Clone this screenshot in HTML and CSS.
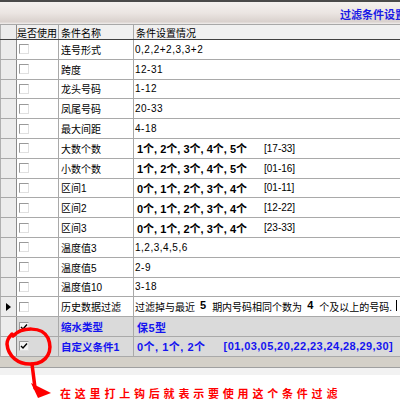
FILE: index.html
```html
<!DOCTYPE html>
<html>
<head>
<meta charset="utf-8">
<link rel="stylesheet" href="styles.css">
</head>
<body>
<div class="win">
  <div class="titlebar"><span class="title">过滤条件设置</span></div>
  <div class="grid">
    <div class="row head">
      <div class="rh"></div>
      <div class="c1">是否使用</div>
      <div class="c2">条件名称</div>
      <div class="c3">条件设置情况</div>
    </div>
    <div class="row"><div class="rh"></div><div class="c1"><span class="cb"></span></div><div class="c2">连号形式</div><div class="c3 plain">0,2,2+2,3,3+2</div></div>
    <div class="row"><div class="rh"></div><div class="c1"><span class="cb"></span></div><div class="c2">跨度</div><div class="c3 plain">12-31</div></div>
    <div class="row"><div class="rh"></div><div class="c1"><span class="cb"></span></div><div class="c2">龙头号码</div><div class="c3 plain">1-12</div></div>
    <div class="row"><div class="rh"></div><div class="c1"><span class="cb"></span></div><div class="c2">凤尾号码</div><div class="c3 plain">20-33</div></div>
    <div class="row"><div class="rh"></div><div class="c1"><span class="cb"></span></div><div class="c2">最大间距</div><div class="c3 plain">4-18</div></div>
    <div class="row"><div class="rh"></div><div class="c1"><span class="cb"></span></div><div class="c2">大数个数</div><div class="c3"><b class="cnt">1个, 2个, 3个, 4个, 5个</b><span class="rng">[17-33]</span></div></div>
    <div class="row"><div class="rh"></div><div class="c1"><span class="cb"></span></div><div class="c2">小数个数</div><div class="c3"><b class="cnt">1个, 2个, 3个, 4个, 5个</b><span class="rng">[01-16]</span></div></div>
    <div class="row"><div class="rh"></div><div class="c1"><span class="cb"></span></div><div class="c2">区间1</div><div class="c3"><b class="cnt">0个, 1个, 2个, 3个, 4个</b><span class="rng">[01-11]</span></div></div>
    <div class="row"><div class="rh"></div><div class="c1"><span class="cb"></span></div><div class="c2">区间2</div><div class="c3"><b class="cnt">0个, 1个, 2个, 3个, 4个</b><span class="rng">[12-22]</span></div></div>
    <div class="row"><div class="rh"></div><div class="c1"><span class="cb"></span></div><div class="c2">区间3</div><div class="c3"><b class="cnt">0个, 1个, 2个, 3个, 4个</b><span class="rng">[23-33]</span></div></div>
    <div class="row"><div class="rh"></div><div class="c1"><span class="cb"></span></div><div class="c2">温度值3</div><div class="c3 plain">1,2,3,4,5,6</div></div>
    <div class="row"><div class="rh"></div><div class="c1"><span class="cb"></span></div><div class="c2">温度值5</div><div class="c3 plain">2-9</div></div>
    <div class="row"><div class="rh"></div><div class="c1"><span class="cb"></span></div><div class="c2">温度值10</div><div class="c3 plain">3-18</div></div>
    <div class="row"><div class="rh"><span class="arrow"></span></div><div class="c1"><span class="cb"></span></div><div class="c2">历史数据过滤</div><div class="c3 edit">过滤掉与最近<b class="num">5</b>期内号码相同个数为<b class="num">4</b>个及以上的号码.<span class="caret"></span></div></div>
    <div class="row sel"><div class="rh"></div><div class="c1"><span class="cb on"><svg viewBox="0 0 8 8" width="8" height="8"><polyline points="1,4 3,6 7,1.5" fill="none" stroke="#000" stroke-width="1.4"/></svg></span></div><div class="c2">缩水类型</div><div class="c3"><b class="val">保5型</b></div></div>
    <div class="row sel"><div class="rh"></div><div class="c1"><span class="cb on"><svg viewBox="0 0 8 8" width="8" height="8"><polyline points="1,4 3,6 7,1.5" fill="none" stroke="#000" stroke-width="1.4"/></svg></span></div><div class="c2">自定义条件1</div><div class="c3"><b class="val">0个, 1个, 2个</b><b class="val list">[01,03,05,20,22,23,24,28,29,30]</b></div></div>
  </div>
  <div class="filler"></div>
  <div class="band"></div>
  <p class="note">在这里打上钩后就表示要使用这个条件过滤</p>
  <svg class="annot" width="400" height="420" viewBox="0 0 400 420">
    <path d="M13 336 C 22 327, 42 326, 48 338 C 53 350, 48 363, 32 364 C 18 365, 8 356, 7 344 C 7 340, 9 337, 12 334" fill="none" stroke="#ff0000" stroke-width="3.5" stroke-linecap="round"/>
    <path d="M32 364 C 33 372, 34 380, 35 388" fill="none" stroke="#ff0000" stroke-width="3.5" stroke-linecap="round"/>
    <polygon points="31,383 51,393 38,398" fill="#ff0000"/>
  </svg>
</div>
</body>
</html>
```
FILE: styles.css
```css
html, body {
  margin: 0;
  padding: 0;
  background: #ffffff;
}
.win {
  position: relative;
  width: 400px;
  height: 420px;
  overflow: hidden;
  font-family: "Liberation Sans", "Noto Sans CJK SC", sans-serif;
  font-size: 10px;
  color: #000;
}
.titlebar {
  height: 22px;
  border-top: 2px solid #4a4a4a;
  border-bottom: 1px solid #a8a8a8;
  background: linear-gradient(#f4f1ef, #ebe5e2 50%, #d9d1cd 90%, #f2efee);
  display: flex;
  align-items: center;
  padding-left: 340px;
  white-space: nowrap;
  overflow: hidden;
}
.title {
  color: #1a1ae6;
  font-weight: bold;
  font-size: 11px;
  font-family: "Noto Sans CJK SC", sans-serif;
  padding-top: 1px;
}
.grid {
  display: flex;
  flex-direction: column;
}
.row {
  display: grid;
  grid-template-columns: 17px 42px 75px 1fr;
  height: 19.8px;
  box-sizing: border-box;
  border-bottom: 1px solid #a9a9a9;
}
.row.head {
  height: 15px;
  background: #f0f0f0;
  border-bottom: 1px solid #404040;
}
.row > div {
  display: flex;
  align-items: center;
  white-space: nowrap;
  overflow: hidden;
}
.rh {
  background: #ececec;
  border-right: 1px solid #8a8a8a;
  border-left: 1px solid #b0b0b0;
  justify-content: center;
}
.c1 {
  border-right: 1px solid #a9a9a9;
  padding-left: 2px;
}
.head .c1 {
  padding-left: 0;
}
.c2 {
  border-right: 1px solid #a9a9a9;
  padding-left: 2px;
}
.c3 {
  padding-left: 1px;
}
.c3.plain {
  letter-spacing: 0.5px;
}
.head .c3 {
  padding-left: 2px;
}
.cb {
  width: 10px;
  height: 10px;
  box-sizing: border-box;
  border: 1px solid;
  border-color: #9a9a9a #e0e0e0 #e0e0e0 #9a9a9a;
  background: #fff;
  display: flex;
  align-items: center;
  justify-content: center;
}
.cb.on {
  background: #f4f4f4;
}
.cnt {
  font-size: 11px;
  width: 127px;
  flex: none;
  padding-left: 2px;
}
.rng {
  font-size: 10px;
}
.edit {
  align-items: flex-start !important;
  padding-top: 2px;
}
.num {
  font-size: 11px;
  margin: 0 6px 0 5px;
}
.caret {
  width: 1px;
  height: 11px;
  background: #000;
  margin-left: 4px;
  margin-top: 1px;
}
.arrow {
  width: 0;
  height: 0;
  border-left: 5px solid #000;
  border-top: 4.5px solid transparent;
  border-bottom: 4.5px solid transparent;
}
.sel .c1,
.sel .c2,
.sel .c3 {
  background: #dadada;
}
.sel .c2 {
  color: #1414f0;
  font-weight: bold;
  font-size: 10.5px;
}
.val {
  color: #1414f0;
  font-size: 11px;
  letter-spacing: 0.5px;
  padding-left: 2px;
}
.val.list {
  padding-left: 18px;
  letter-spacing: 0.4px;
}
.filler {
  height: 10px;
  background: #d4d0c8;
  border-bottom: 1px solid #a0a0a0;
}
.band {
  height: 7px;
  background: #f2f2f2;
}
.note {
  margin: 11px 0 0 60px;
  color: #ff0000;
  font-family: "Noto Sans CJK SC", sans-serif;
  font-weight: bold;
  font-size: 11px;
  letter-spacing: 3.8px;
  line-height: 14px;
  white-space: nowrap;
}
.annot {
  position: absolute;
  left: 0;
  top: 0;
  pointer-events: none;
}
```
